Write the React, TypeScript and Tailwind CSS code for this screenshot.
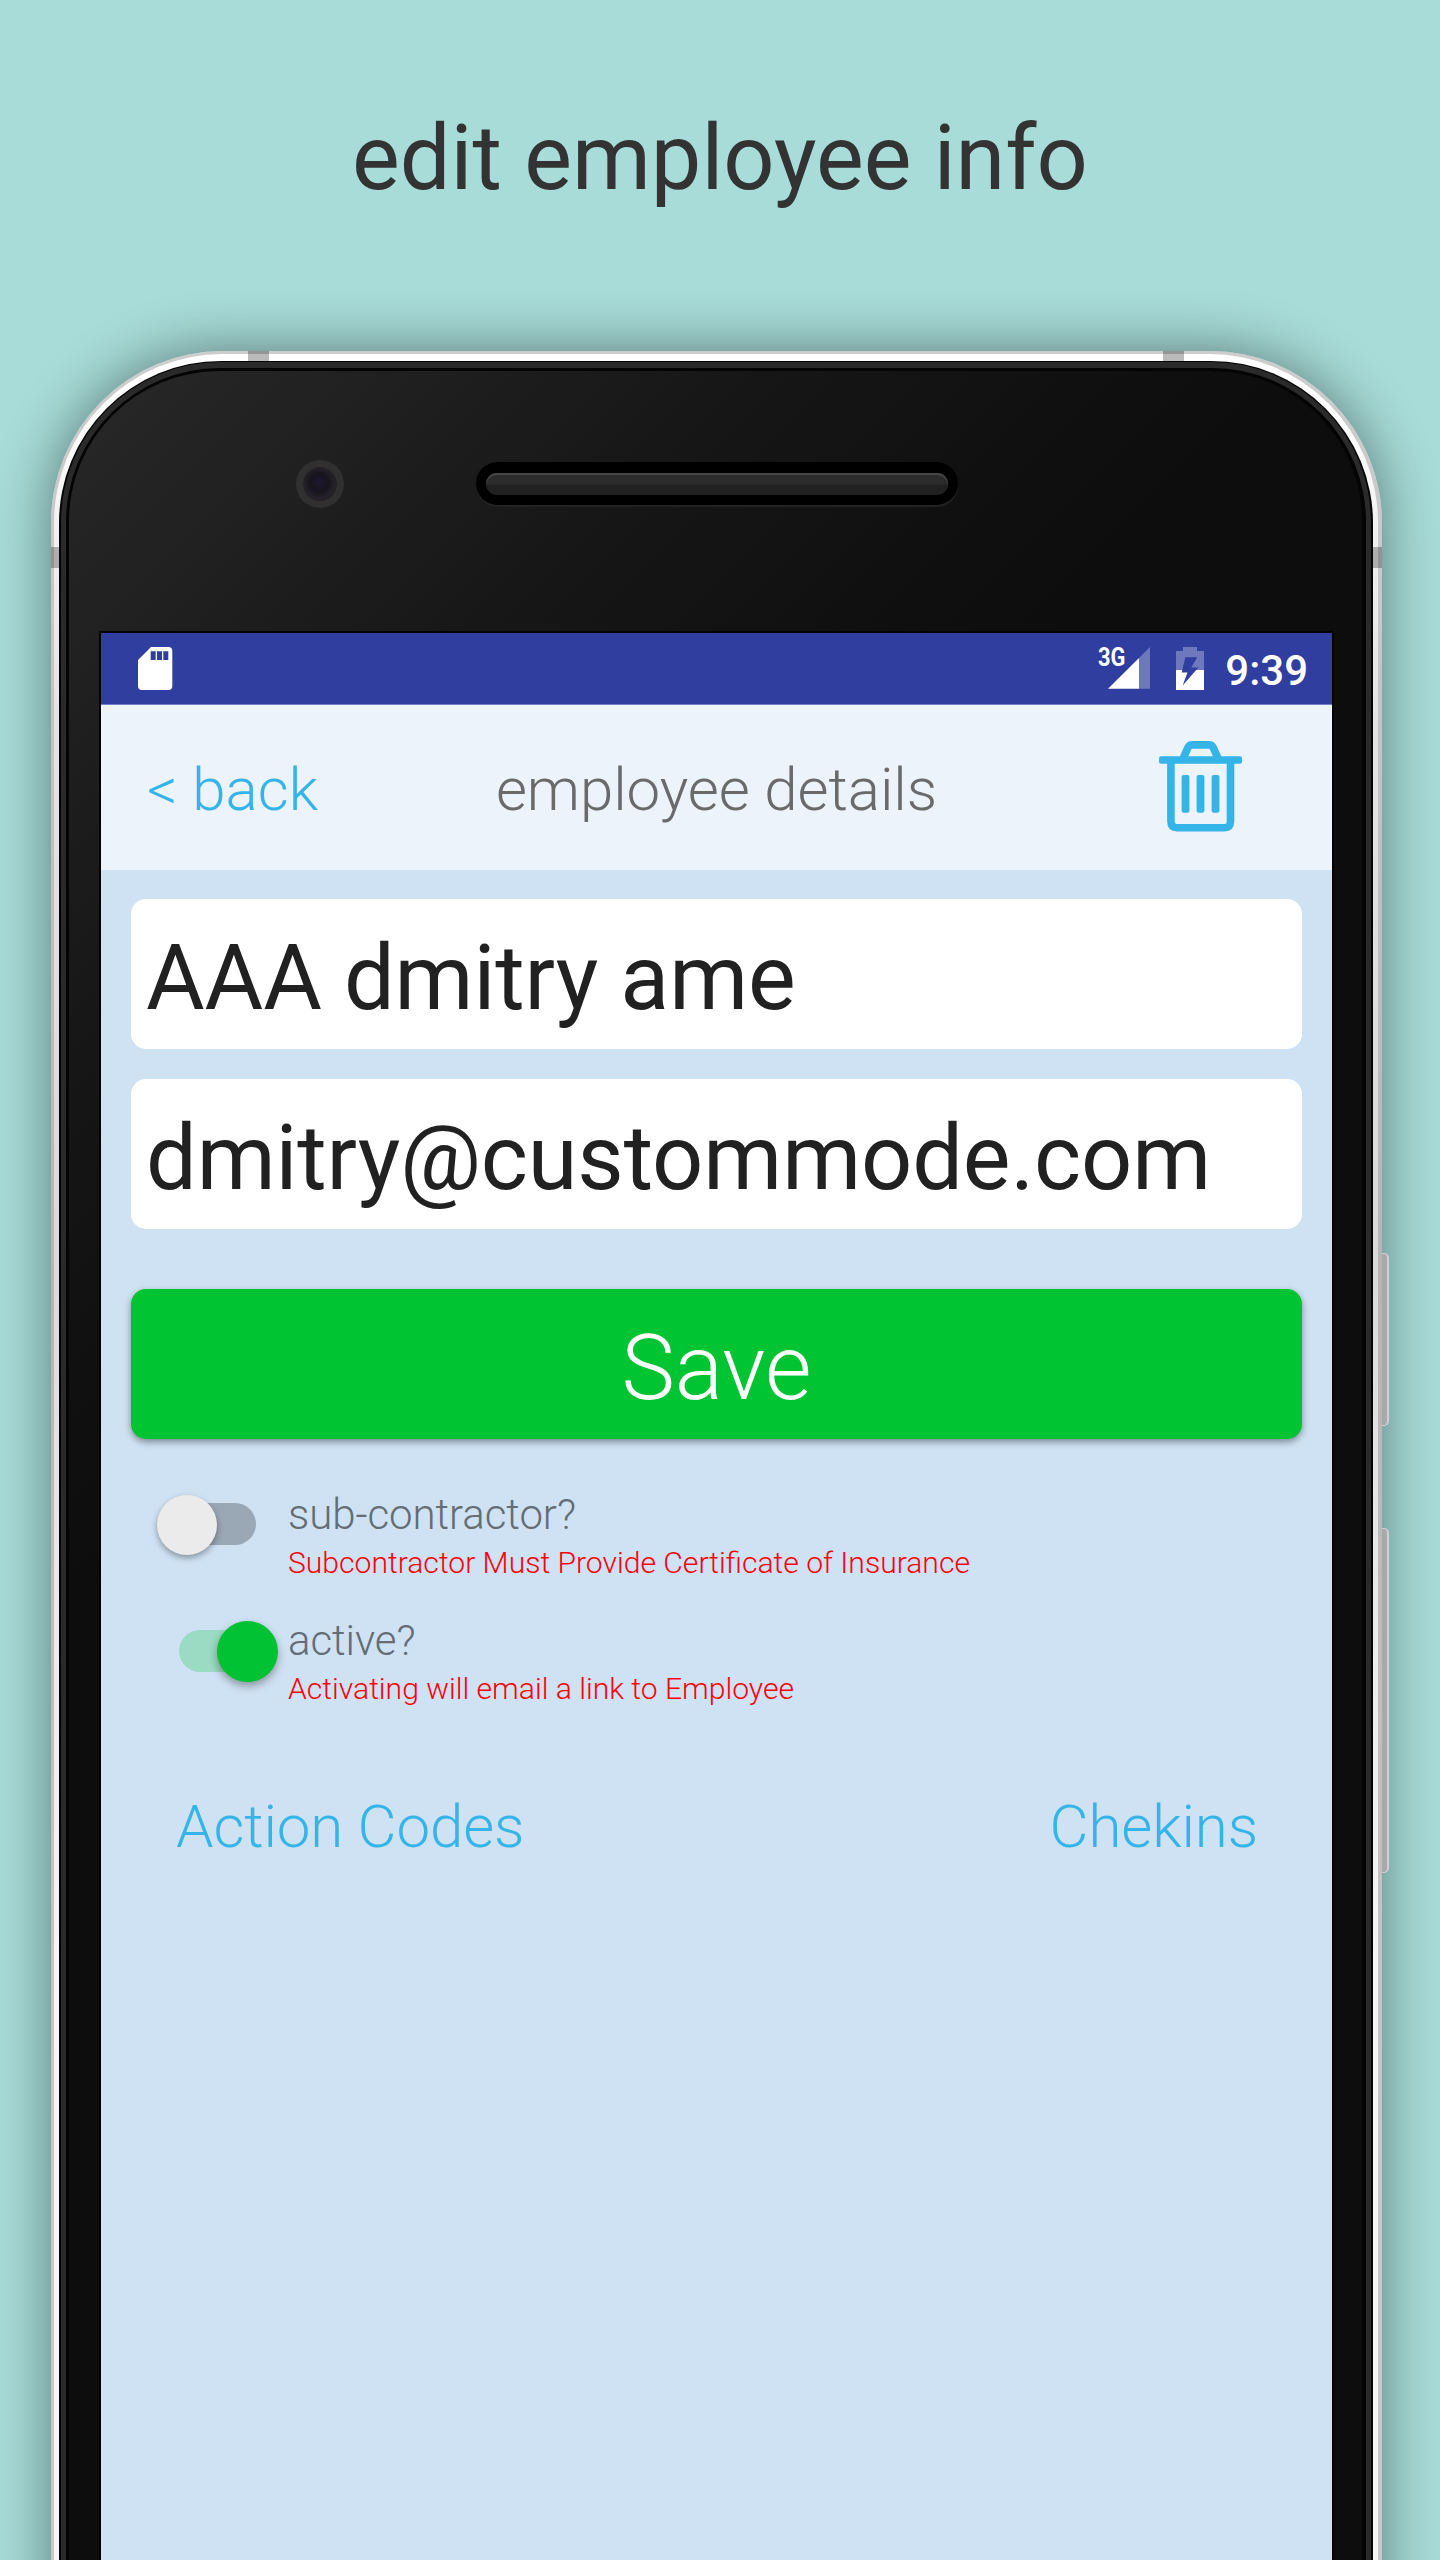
import type { ReactNode } from "react";

function SdCardIcon() {
  return (
    <svg className="h-[43px] w-[35px]" viewBox="0 0 35 43">
      <path
        fill="#fff"
        fillRule="evenodd"
        d="M13 0H30.3Q34.3 0 34.3 4V39Q34.3 43 30.3 43H4Q0 43 0 39V13ZM12.7 4.3V13H17.7V4.3ZM19 4.3V13H24V4.3ZM25.3 4.3V13H30.3V4.3Z"
      />
    </svg>
  );
}

function SignalIcon() {
  return (
    <svg className="h-[42px] w-[42px]" viewBox="0 0 42 42">
      <path fill="#fff" fillOpacity=".3" d="M31 11L42 0V41.7H31Z" />
      <path fill="#fff" d="M0 41.7L31 11V41.7Z" />
    </svg>
  );
}

function BatteryIcon() {
  return (
    <svg className="h-[43px] w-[28px]" viewBox="0 0 28 43">
      <path fill="#fff" fillOpacity=".3" d="M7 0H21V4H28V23H0V4H7Z" />
      <path fill="#fff" d="M0 23H28V43H0Z" />
      <path fill="#303e9f" d="M9.3 10.3H21.3L15.3 20.5H22.3L6.7 38.5L11.5 25.5H5.7Z" />
    </svg>
  );
}

function TrashIcon() {
  return (
    <svg className="h-[91px] w-[83px]" viewBox="0 0 83 91" fill="none">
      <path stroke="#35b5e7" strokeWidth="7.7" d="M24.3 17L28.8 6.8Q30.2 3.85 33 3.85H50Q53 3.85 54.4 6.8L58.8 17" />
      <path stroke="#35b5e7" strokeWidth="7.6" d="M11.9 20V80Q11.9 86.7 18 86.7H65.500Q71.500 86.7 71.500 80V20" />
      <g fill="#35b5e7">
        <rect x="0" y="15.200" width="83" height="7.600" rx="2" />
        <rect x="22.600" y="34" width="7.800" height="37.700" rx="2" />
        <rect x="37.600" y="34" width="7.800" height="37.700" rx="2" />
        <rect x="52.600" y="34" width="7.800" height="37.700" rx="2" />
      </g>
    </svg>
  );
}

function Switch({ on }: { on: boolean }) {
  return on ? (
    <div className="relative mt-[5px] ml-[78px] h-[61px] w-[99px] pt-[9px]">
      <div className="h-[42px] w-[90px] rounded-full bg-[#9bdac3]" />
      <div className="absolute top-0 right-0 size-[61px] rounded-full bg-[#01c232] shadow-[0_4px_8px_rgba(0,0,0,0.35)]" />
    </div>
  ) : (
    <div className="relative mt-[5px] ml-[56px] h-[61px] w-[99px] pt-[8px]">
      <div className="ml-[12px] h-[42px] w-[87px] rounded-full bg-[#9aa7b4]" />
      <div className="absolute top-0 left-0 size-[60px] rounded-full bg-[#ebebeb] shadow-[0_3px_6px_rgba(0,0,0,0.35)]" />
    </div>
  );
}

function SwitchRow({ on, label, note }: { on: boolean; label: string; note: string }) {
  return (
    <div className="flex h-[96px]">
      <div className="flex w-[187px] shrink-0 items-start">
        <Switch on={on} />
      </div>
      <div className="font-light whitespace-nowrap">
        <div className="text-[42px] leading-[50px] tracking-[-0.06px] text-[#646d75]">{label}</div>
        <div className="text-[30.100px] leading-[46px] text-[#ff0008]">{note}</div>
      </div>
    </div>
  );
}

function Field({ children }: { children: ReactNode }) {
  return (
    <div className="h-[150px] rounded-[15px] bg-white pt-[9px] pl-[15px] text-[90px] leading-[141px] tracking-[-0.12px] whitespace-nowrap text-[#212121]">
      {children}
    </div>
  );
}

function Screen() {
  return (
    <div className="flex h-full flex-col bg-[#cfe2f3] shadow-[0_0_0_2px_#030303]">
      <div className="flex h-[72px] shrink-0 items-start border-b border-[#7580c2] bg-[#303e9f] pt-[14px] pr-[24px] pl-[37px]">
        <SdCardIcon />
        <div className="relative ml-auto">
          <span className="absolute top-[1px] -left-[10px] origin-left scale-x-[0.84] text-[26px] leading-[18px] font-bold text-white">
            3G
          </span>
          <SignalIcon />
        </div>
        <div className="ml-[26px]">
          <BatteryIcon />
        </div>
        <div className="ml-[21px] text-[42px] leading-[48px] font-medium text-white">9:39</div>
      </div>
      <div className="grid h-[165px] shrink-0 grid-cols-[1fr_auto_1fr] bg-[#ecf3fa] text-[60px] leading-[169px] font-light">
        <div className="pl-[46px] text-[#35b5e7]">&lt; back</div>
        <div className="tracking-[-0.06px] text-[#686a6c]">employee details</div>
        <div className="mt-[36px] mr-[90px] justify-self-end">
          <TrashIcon />
        </div>
      </div>
      <div className="px-[30px] pt-[29px]">
        <div className="flex flex-col gap-[30px]">
          <Field>AAA dmitry ame</Field>
          <Field>dmitry@custommode.com</Field>
        </div>
        <div className="mt-[60px] h-[150px] rounded-[15px] bg-[#01c432] pt-[9px] text-center text-[90px] leading-[141px] font-light text-white shadow-[0_3px_7px_rgba(0,0,0,0.4)]">
          Save
        </div>
      </div>
      <div className="mt-[51px] flex flex-col gap-[30px]">
        <SwitchRow on={false} label="sub-contractor?" note="Subcontractor Must Provide Certificate of Insurance" />
        <SwitchRow on label="active?" note="Activating will email a link to Employee" />
      </div>
      <div className="mt-[80px] flex justify-between pr-[74px] pl-[75px] text-[60px] leading-[70px] font-light tracking-[-0.12px] text-[#35b5e7]">
        <span>Action Codes</span>
        <span>Chekins</span>
      </div>
    </div>
  );
}

function Phone() {
  return (
    <div className="relative ml-[51px] h-[2209px] w-[1331px]">
      <div className="relative h-[2300px] rounded-t-[172px] bg-linear-to-b from-[#cdcdcd] from-0% via-[#b5b5b5] via-40% to-[#c8c8c8] to-80% pt-[3px] pr-[4px] pl-[3px] shadow-[0_0_56px_rgba(0,0,0,0.45)]">
        <div className="h-full rounded-t-[169px] bg-[linear-gradient(to_bottom,#fff_0px,#fff_60px,#f0f0f0_180px,#e4e4e4_350px,#d9d9d9_900px,#eaeaea_1250px,#f5f5f5_1600px)] pt-[7px] pr-[5px] pl-[5px]">
          <div className="h-full rounded-t-[162px] bg-[#030303] px-[2px] pt-[1px]">
            <div className="h-full rounded-t-[160px] bg-[#2a2a2a] px-[5px] pt-[6px]">
              <div className="h-full rounded-t-[154px] bg-[#040404] pt-[3px] pr-[4px] pl-[3px]">
                <div className="flex h-full flex-col rounded-t-[150px] bg-[linear-gradient(135deg,#282828_0px,#222222_177px,#171717_466px,#101010_721px,#0d0d0d_900px)] pr-[30px] pl-[32px]">
                  <div className="flex h-[262px] shrink-0 items-start">
                    <div className="mt-[89px] ml-[195px] flex size-[48px] items-center justify-center rounded-full bg-[#303030]">
                      <div className="size-[34px] rounded-full bg-[radial-gradient(circle_at_48%_46%,#1f1830_0%,#17141c_35%,#25222a_62%,#121114_100%)]" />
                    </div>
                    <div className="mt-[91px] ml-[132px] h-[43px] w-[482px] rounded-full bg-black px-[10px] pt-[11px] shadow-[0_2px_1px_#242424]">
                      <div className="h-[22px] rounded-full bg-linear-to-b from-[#2b2b2b] from-50% to-[#212121] to-55% shadow-[inset_0_2px_1px_#4a4848]" />
                    </div>
                  </div>
                  <div className="grow">
                    <Screen />
                  </div>
                </div>
              </div>
            </div>
          </div>
        </div>
      </div>
      {/* side keys */}
      <div className="absolute top-[902px] -right-[7px] h-[173px] w-[7px] rounded-r-[5px] border-y border-r-2 border-[#d0d0d0] bg-[#a9a9a9]" />
      <div className="absolute top-[1177px] -right-[7px] h-[345px] w-[7px] rounded-r-[5px] border-y border-r-2 border-[#d0d0d0] bg-[#a9a9a9]" />
      {/* antenna bands */}
      <div className="absolute top-0 left-[197px] h-[10px] w-[21px] bg-black/27" />
      <div className="absolute top-0 left-[1112px] h-[10px] w-[21px] bg-black/27" />
      <div className="absolute top-[196px] left-0 h-[21px] w-[8px] bg-black/27" />
      <div className="absolute top-[196px] right-0 h-[21px] w-[9px] bg-black/27" />
    </div>
  );
}

export default function App() {
  return (
    <div className="h-[2560px] w-[1440px] overflow-hidden bg-[#a7dcd8] font-['Roboto',sans-serif]">
      <div className="h-[351px] pt-[104px] text-center text-[90px] leading-[110px] text-[#333]">edit employee info</div>
      <Phone />
    </div>
  );
}
